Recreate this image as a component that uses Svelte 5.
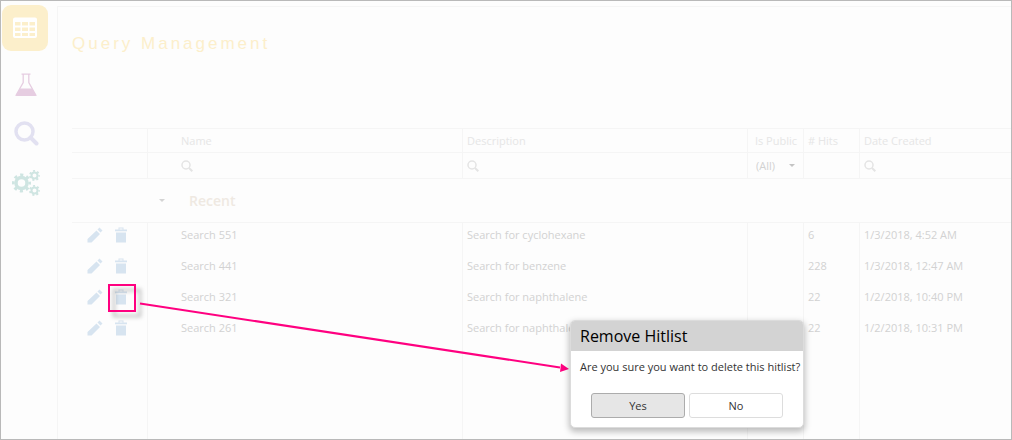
<script>
  let rows = $state([
    { name: 'Search 551', description: 'Search for cyclohexane', hits: 6, created: '1/3/2018, 4:52 AM' },
    { name: 'Search 441', description: 'Search for benzene', hits: 228, created: '1/3/2018, 12:47 AM' },
    { name: 'Search 321', description: 'Search for naphthalene', hits: 22, created: '1/2/2018, 10:40 PM' },
    { name: 'Search 261', description: 'Search for naphthalene', hits: 22, created: '1/2/2018, 10:31 PM' }
  ]);
</script>

{#snippet filter(label)}
  <label class="filter">
    <svg viewBox="0 0 12 12" width="12" height="12" aria-hidden="true">
      <circle cx="5" cy="5" r="4" fill="none" stroke="currentColor" stroke-width="1.5" />
      <path d="M8 8l3.3 3.3" stroke="currentColor" stroke-width="2" />
    </svg>
    <input type="text" aria-label={label} />
  </label>
{/snippet}

<div class="page">
  <nav class="sidebar">
    <a href="#queries" class="item active" aria-label="Query Management">
      <svg viewBox="0 0 26 22" width="26" height="22">
        <path fill="#fff" fill-rule="evenodd" d="M3 0.5h20a2 2 0 0 1 2 2v16.500a2 2 0 0 1-2 2H3a2 2 0 0 1-2-2V2.500a2 2 0 0 1 2-2zM3 5v3.500h5.500V5zM10 5v3.500h6V5zM17.500 5v3.500H23V5zM3 10.500v3.500h5.500v-3.500zM10 10.500v3.500h6v-3.500zM17.500 10.500v3.500H23v-3.500zM3 16v3h5.500v-3zM10 16v3h6v-3zM17.500 16v3H23v-3z" />
      </svg>
    </a>
    <a href="#assays" class="item flask" aria-label="Assays">
      <svg viewBox="0 0 22 24" width="22" height="24">
        <path fill="none" stroke="currentColor" stroke-width="1.300" d="M6.500 1.200h9M8.200 1.500v8L1.200 22h19.600L13.800 9.500v-8" />
        <path fill="currentColor" d="M5 15.500h12l4 6.500q0.300 1-1 1H2q-1.300 0-1-1z" />
      </svg>
    </a>
    <a href="#search" class="item search" aria-label="Search">
      <svg viewBox="0 0 25 25" width="25" height="25">
        <circle cx="10.500" cy="10.500" r="8.500" fill="none" stroke="currentColor" stroke-width="3.500" />
        <path d="M16.500 16.500l6 6" stroke="currentColor" stroke-width="4" stroke-linecap="round" />
      </svg>
    </a>
    <a href="#settings" class="item gears" aria-label="Settings">
      <svg viewBox="0 0 29 26" width="29" height="26">
        <g fill="none" stroke="currentColor">
          <circle cx="9.500" cy="13" r="5.500" stroke-width="3.500" />
          <circle cx="9.500" cy="13" r="8.200" stroke-width="2.600" stroke-dasharray="3.220 3.220" stroke-dashoffset="1.610" />
          <circle cx="22.500" cy="5.500" r="3" stroke-width="2" />
          <circle cx="22.500" cy="5.500" r="4.600" stroke-width="1.800" stroke-dasharray="2.060 2.069" stroke-dashoffset="1.030" />
          <circle cx="22.500" cy="20.500" r="3" stroke-width="2" />
          <circle cx="22.500" cy="20.500" r="4.600" stroke-width="1.800" stroke-dasharray="2.060 2.069" stroke-dashoffset="1.030" />
        </g>
      </svg>
    </a>
  </nav>

  <main>
    <h1>Query Management</h1>
    <table>
      <colgroup>
        <col class="c-actions" /><col class="c-group" /><col class="c-name" /><col class="c-desc" />
        <col class="c-public" /><col class="c-hits" /><col class="c-date" />
      </colgroup>
      <thead>
        <tr class="titles">
          <th class="line"></th><th></th>
          <th class="line">Name</th>
          <th class="line">Description</th>
          <th class="line public">Is Public</th>
          <th class="line hits"># Hits</th>
          <th>Date Created</th>
        </tr>
        <tr class="filters">
          <td class="line"></td><td></td>
          <td class="line">{@render filter('Filter by name')}</td>
          <td class="line">{@render filter('Filter by description')}</td>
          <td class="line public">
            <div class="choice">
              <select aria-label="Filter by visibility"><option>(All)</option></select>
              <svg viewBox="0 0 6 3" width="6" height="3"><path d="M0 0h6L3 3z" fill="#c4c4c4" /></svg>
            </div>
          </td>
          <td class="line"></td>
          <td>{@render filter('Filter by date')}</td>
        </tr>
      </thead>
      <tbody>
        <tr class="group">
          <td></td>
          <td class="toggle">
            <button aria-label="Collapse Recent">
              <svg viewBox="0 0 6 3" width="6" height="3"><path d="M0 0h6L3 3z" fill="#d4d4d4" /></svg>
            </button>
          </td>
          <th colspan="5">Recent</th>
        </tr>
        {#each rows as row}
          <tr class="entry">
            <td class="line">
              <div class="actions">
                <button aria-label="Edit {row.name}">
                  <svg viewBox="0 0 16 16" width="16" height="16">
                    <path fill="currentColor" d="M0.500 12L9.500 3.500l3.500 3.500L4.500 15.500h-4zM10.500 2.500L12.500 0.500l3 3-2 2z" />
                  </svg>
                </button>
                <button aria-label="Delete {row.name}">
                  <svg viewBox="0 0 14 16" width="14" height="16">
                    <path fill="currentColor" fill-rule="evenodd" d="M1 2.500h3.500V0.500h5v2H13v1.800H1zM5.500 1.500v1h3v-1zM2 5.500h10v10H2z" />
                  </svg>
                </button>
              </div>
            </td>
            <td></td>
            <td class="line">{row.name}</td>
            <td class="line">{row.description}</td>
            <td class="line"></td>
            <td class="line hits">{row.hits}</td>
            <td>{row.created}</td>
          </tr>
        {/each}
        <tr class="rest">
          <td class="line"></td><td></td><td class="line"></td><td class="line"></td>
          <td class="line"></td><td class="line"></td><td></td>
        </tr>
      </tbody>
    </table>
  </main>

  <svg class="callout" aria-hidden="true">
    <rect class="frame" x="109" y="285" width="26" height="26" />
    <path d="M140 303.500L560 367.500" stroke="#ff0080" stroke-width="2" />
    <path d="M561 363.500l8 5.500-9 3z" fill="#ff0080" />
  </svg>

  <div class="dialog" role="dialog" aria-labelledby="dialog-title">
    <h2 id="dialog-title">Remove Hitlist</h2>
    <p>Are you sure you want to delete this hitlist?</p>
    <div class="buttons">
      <button class="yes">Yes</button>
      <button>No</button>
    </div>
  </div>
</div>

<style>
  :global(body) {
    background: #fdfdfd;
  }
  .page {
    position: relative;
    box-sizing: border-box;
    display: flex;
    min-height: 100vh;
    border: 1px solid #b9b9b9;
    font: 11px/16px "Open Sans", "Noto Sans", sans-serif;
    color: #d2d2d2;
    overflow: hidden;
  }
  button,
  input,
  select {
    font: inherit;
    color: inherit;
    margin: 0;
    padding: 0;
    border: 0;
    background: none;
  }
  svg {
    display: block;
    flex: none;
  }
  .sidebar {
    flex: none;
    width: 48px;
    padding: 4px 7px 0 1px;
  }
  .item {
    display: flex;
    align-items: center;
    justify-content: center;
    height: 49px;
  }
  .item.active {
    width: 46px;
    height: 46px;
    margin-bottom: 9px;
    border-radius: 9px;
    background: #fcefcb;
  }
  .flask { color: #e6cde1; }
  .search { color: #e2e1f1; }
  .gears { color: #cfe5e2; }
  main {
    flex: 1;
    min-width: 0;
    display: flex;
    flex-direction: column;
    margin-top: 5px;
    padding-left: 14px;
    border-left: 1px solid #f5f5f5;
    border-top: 1px solid #f5f5f5;
  }
  h1 {
    margin: 25px 0 72px;
    font: 17px/24px "Liberation Sans", Arial, sans-serif;
    letter-spacing: 3px;
    color: #fcefcb;
  }
  table {
    flex: 1;
    width: 100%;
    table-layout: fixed;
    border-collapse: separate;
    border-spacing: 0;
  }
  .c-actions { width: 76px; }
  .c-group { width: 29px; }
  .c-name { width: 286px; }
  .c-desc { width: 285px; }
  .c-public { width: 56px; }
  .c-hits { width: 56px; }
  th, td {
    padding: 0 4px;
    text-align: left;
    font-weight: 400;
    white-space: nowrap;
  }
  .line { border-right: 1px solid #f5f5f5; }
  .titles th {
    height: 23px;
    border-top: 1px solid #f5f5f5;
    border-bottom: 1px solid #f5f5f5;
    color: #e6e6e6;
  }
  .titles .public {
    text-align: right;
    padding-right: 6px;
  }
  .filters td {
    height: 25px;
    border-bottom: 1px solid #f5f5f5;
  }
  .filter {
    display: flex;
    align-items: center;
    gap: 6px;
    color: #e4e4e4;
  }
  .filter input {
    flex: 1;
    min-width: 0;
    height: 18px;
  }
  .choice {
    display: flex;
    align-items: center;
    padding: 0 4px;
  }
  .choice select {
    flex: 1;
    min-width: 0;
    appearance: none;
  }
  .group td,
  .group th {
    height: 43px;
    border-bottom: 1px solid #f5f5f5;
  }
  .group th {
    padding-left: 12px;
    font-size: 14px;
    font-weight: 600;
    color: #efe9e2;
  }
  .toggle { padding-left: 11px; }
  .toggle button {
    display: block;
    padding: 4px 0;
  }
  .entry td {
    height: 27px;
    padding-top: 4px;
    vertical-align: top;
  }
  .actions {
    display: flex;
    gap: 11px;
    padding-left: 11px;
    color: #d7e4f0;
  }
  .rest td { height: auto; }
  .callout {
    position: absolute;
    inset: -1px;
    width: 100%;
    height: 100%;
    pointer-events: none;
  }
  .frame {
    fill: none;
    stroke: #ff0080;
    stroke-width: 2px;
    filter: drop-shadow(5px 5px 2px rgba(0, 0, 0, 0.3));
  }
  .dialog {
    position: absolute;
    left: 569px;
    top: 319px;
    box-sizing: border-box;
    width: 234px;
    border: 1px solid #dcdcdc;
    border-radius: 5px;
    background: #fff;
    color: #333;
    box-shadow: 0 3px 6px 1px rgba(0, 0, 0, 0.25);
    overflow: hidden;
  }
  .dialog h2 {
    margin: 0;
    padding: 3px 9px;
    font-size: 16px;
    font-weight: 400;
    line-height: 24px;
    color: #000;
    background: #d3d3d3;
  }
  .dialog p {
    margin: 8px 9px 18px;
    white-space: nowrap;
  }
  .buttons {
    display: flex;
    gap: 4px;
    padding: 0 20px 9px;
  }
  .buttons button {
    flex: 1;
    height: 25px;
    border: 1px solid #ddd;
    border-radius: 3px;
    background: #fff;
  }
  .buttons .yes {
    border-color: #acacac;
    background: #e6e6e6;
  }
</style>
